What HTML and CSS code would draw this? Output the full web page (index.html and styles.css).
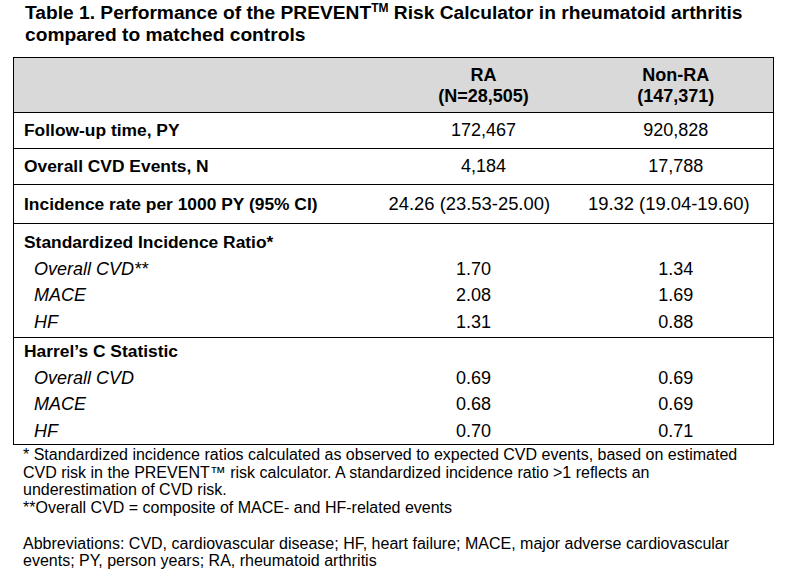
FILE: index.html
```html
<!DOCTYPE html>
<html lang="en">
<head>
<meta charset="utf-8">
<title>Table 1</title>
<link rel="stylesheet" href="styles.css">
</head>
<body>
<div class="page">
  <h1 class="title">Table 1. Performance of the PREVENT<sup class="tm">TM</sup> Risk Calculator in rheumatoid arthritis<br>compared to matched controls</h1>
  <table class="data">
    <colgroup>
      <col class="c-label">
      <col class="c-ra">
      <col class="c-non">
    </colgroup>
    <thead>
      <tr class="head">
        <th></th>
        <th>RA<br>(N=28,505)</th>
        <th>Non-RA<br>(147,371)</th>
      </tr>
    </thead>
    <tbody>
      <tr class="single">
        <td class="lbl">Follow-up time, PY</td>
        <td class="val">172,467</td>
        <td class="val">920,828</td>
      </tr>
      <tr class="single">
        <td class="lbl">Overall CVD Events, N</td>
        <td class="val">4,184</td>
        <td class="val">17,788</td>
      </tr>
      <tr class="single tall">
        <td class="lbl">Incidence rate per 1000 PY (95% CI)</td>
        <td class="val wide-ra">24.26 (23.53-25.00)</td>
        <td class="val wide-non">19.32 (19.04-19.60)</td>
      </tr>
    </tbody>
    <tbody class="group sir">
      <tr class="ghead">
        <td class="lbl">Standardized Incidence Ratio*</td>
        <td></td>
        <td></td>
      </tr>
      <tr class="sub">
        <td class="sublbl">Overall CVD**</td>
        <td class="val ra">1.70</td>
        <td class="val">1.34</td>
      </tr>
      <tr class="sub">
        <td class="sublbl">MACE</td>
        <td class="val ra">2.08</td>
        <td class="val">1.69</td>
      </tr>
      <tr class="sub last">
        <td class="sublbl">HF</td>
        <td class="val ra">1.31</td>
        <td class="val">0.88</td>
      </tr>
    </tbody>
    <tbody class="group harrel">
      <tr class="ghead">
        <td class="lbl">Harrel’s C Statistic</td>
        <td></td>
        <td></td>
      </tr>
      <tr class="sub">
        <td class="sublbl">Overall CVD</td>
        <td class="val ra">0.69</td>
        <td class="val">0.69</td>
      </tr>
      <tr class="sub">
        <td class="sublbl">MACE</td>
        <td class="val ra">0.68</td>
        <td class="val">0.69</td>
      </tr>
      <tr class="sub last">
        <td class="sublbl">HF</td>
        <td class="val ra">0.70</td>
        <td class="val">0.71</td>
      </tr>
    </tbody>
  </table>
  <div class="notes">
    <p>* Standardized incidence ratios calculated as observed to expected CVD events, based on estimated<br>CVD risk in the PREVENT™ risk calculator. A standardized incidence ratio &gt;1 reflects an<br>underestimation of CVD risk.<br>**Overall CVD = composite of MACE- and HF-related events</p>
    <p>Abbreviations: CVD, cardiovascular disease; HF, heart failure; MACE, major adverse cardiovascular<br>events; PY, person years; RA, rheumatoid arthritis</p>
  </div>
</div>
</body>
</html>
```

FILE: styles.css
```css
html, body {
  margin: 0;
  padding: 0;
  background: #ffffff;
}

body {
  font-family: "Liberation Sans", Arial, sans-serif;
  color: #000000;
}

.page {
  padding: 2px 0 0 13px;
}

.title {
  margin: 0 0 11px 12px;
  font-size: 19.2px;
  line-height: 22px;
  font-weight: bold;
  white-space: nowrap;
}

.tm {
  font-size: 12px;
  line-height: 0;
  vertical-align: 7px;
}

.data {
  border-collapse: collapse;
  table-layout: fixed;
  width: 760px;
  font-size: 18px;
}

.c-label { width: 375px; }
.c-ra { width: 190px; }
.c-non { width: 195px; }

.data th,
.data td {
  padding: 0;
  white-space: nowrap;
}

.head th {
  background: #d9d9d9;
  border-top: 1px solid #000;
  border-bottom: 1px solid #000;
  font-weight: bold;
  text-align: center;
  line-height: 21px;
  height: 53px;
  padding-top: 1px;
}

.head th:first-child {
  border-left: 1px solid #000;
}

.head th:last-child {
  border-right: 1px solid #000;
}

.single td {
  border-top: 1px solid #000;
  border-bottom: 1px solid #000;
  height: 35px;
}

.single.tall td {
  height: 38px;
}

.single td:first-child,
.group td:first-child {
  border-left: 1px solid #000;
}

.single td:last-child,
.group td:last-child {
  border-right: 1px solid #000;
}

.lbl {
  font-weight: bold;
  font-size: 17.4px;
  padding-left: 10px !important;
}

.val {
  text-align: center;
}

.val.ra {
  padding-right: 20px !important;
}

.val.wide-ra {
  font-size: 18.4px;
  padding-right: 33px !important;
}

.val.wide-non {
  font-size: 18.4px;
  padding-right: 14px !important;
}

.group {
  border-top: 1px solid #000;
  border-bottom: 1px solid #000;
}

.group td {
  line-height: 26.5px;
  height: 26px;
}

.sir .ghead td {
  padding-top: 5px;
}

.sir .last td {
  padding-bottom: 2px;
}

.sublbl {
  font-style: italic;
  padding-left: 20px !important;
}

.notes {
  margin: 1px 0 0 10px;
  font-size: 16px;
  line-height: 17.7px;
  white-space: nowrap;
}

.notes p {
  margin: 0 0 17.7px 0;
}
```
